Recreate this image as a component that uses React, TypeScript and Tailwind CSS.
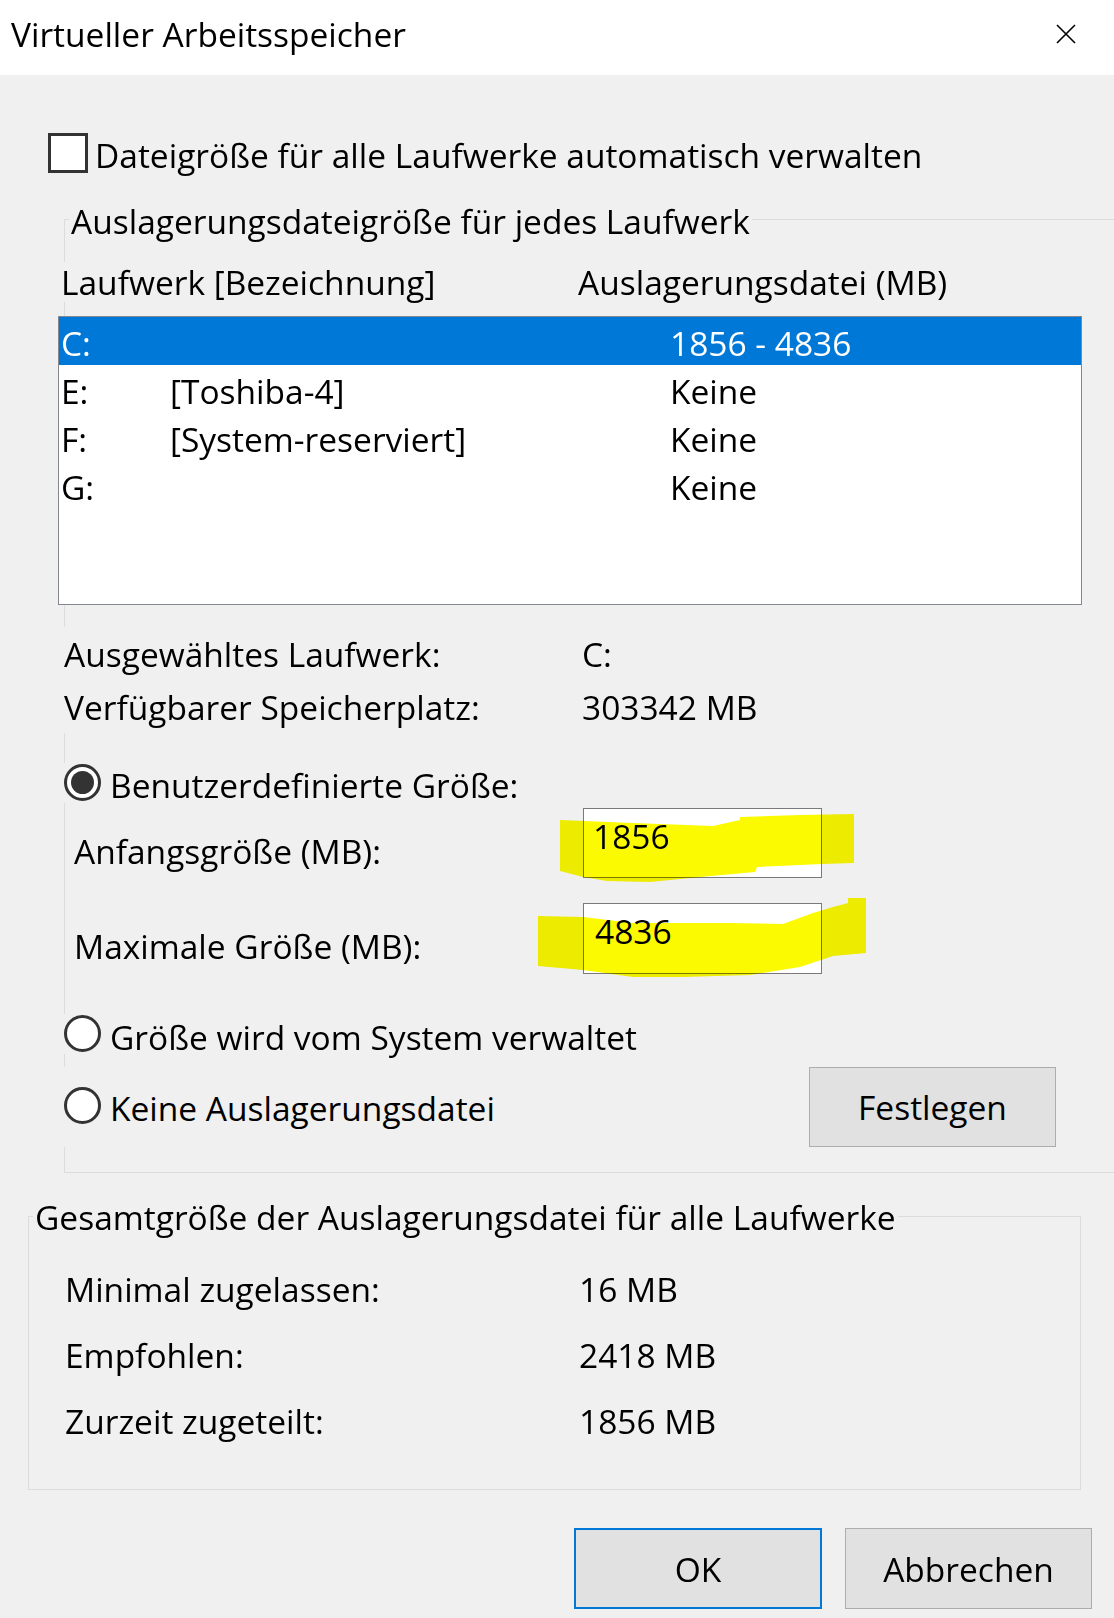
function Radio({ checked }: { checked?: boolean }) {
  return (
    <span className="flex h-[37px] w-[37px] shrink-0 items-center justify-center rounded-full border-[3px] border-[#333333] bg-white">
      {checked && <span className="h-[23px] w-[23px] rounded-full bg-[#333333]" />}
    </span>
  );
}

const drives = [
  { id: "C:", label: "", size: "1856 - 4836", selected: true },
  { id: "E:", label: "[Toshiba-4]", size: "Keine" },
  { id: "F:", label: "[System-reserviert]", size: "Keine" },
  { id: "G:", label: "", size: "Keine" },
];

const totals = [
  ["Minimal zugelassen:", "16 MB"],
  ["Empfohlen:", "2418 MB"],
  ["Zurzeit zugeteilt:", "1856 MB"],
];

export default function App() {
  return (
    <div className="h-[1618px] w-[1114px] overflow-hidden bg-[#f0f0f0] font-['Open_Sans',sans-serif] text-[33.5px] leading-[40px] text-black">
      {/* Titelleiste */}
      <div className="flex h-[75px] items-center justify-between bg-white pb-[7px] pl-[11px] pr-[38px]">
        <span>Virtueller Arbeitsspeicher</span>
        <svg width="20" height="20" viewBox="0 0 20 20">
          <path d="M1 1L19 19M19 1L1 19" stroke="#000" strokeWidth="1.6" />
        </svg>
      </div>

      <div className="mt-[58px] flex h-[40px] items-start pl-[48px]">
        <span className="h-[40px] w-[40px] shrink-0 border-[3px] border-[#333333] bg-white" />
        <span className="ml-[7px] mt-[2px]">Dateigröße für alle Laufwerke automatisch verwalten</span>
      </div>

      {/* Gruppe: pro Laufwerk */}
      <div className="relative ml-[64px] mt-[46px] h-[954px] border-y border-l border-[#dcdcdc]">
        <span className="absolute left-[4px] top-[-19px] bg-[#f0f0f0] px-[2px]">
          Auslagerungsdateigröße für jedes Laufwerk
        </span>

        <div className="relative -ml-[4px] mt-[42px] flex h-[40px] bg-[#f0f0f0]">
          <span className="w-[517px]">Laufwerk [Bezeichnung]</span>
          <span>Auslagerungsdatei (MB)</span>
        </div>

        <div className="relative -ml-[7px] mt-[14px] h-[289px] w-[1024px] border border-[#828790] bg-white">
          {drives.map((d) => (
            <div
              key={d.id}
              className={`flex h-[48px] items-center pl-[2px] pt-[4px] ${d.selected ? "bg-[#0078d7] text-white" : ""}`}
            >
              <span className="w-[109px]">{d.id}</span>
              <span className="w-[500px]">{d.label}</span>
              <span>{d.size}</span>
            </div>
          ))}
        </div>

        <div className="relative -ml-[1px] mt-[22px] bg-[#f0f0f0]">
          <div className="flex h-[53px] items-center">
            <span className="w-[518px]">Ausgewähltes Laufwerk:</span>
            <span>C:</span>
          </div>
          <div className="flex h-[53px] items-center">
            <span className="w-[518px]">Verfügbarer Speicherplatz:</span>
            <span>303342 MB</span>
          </div>
        </div>

        <div className="relative -ml-[1px] mt-[30px] flex h-[40px] items-start bg-[#f0f0f0]">
          <span className="mt-[1px]">
            <Radio checked />
          </span>
          <span className="ml-[9px] mt-[2px]">Benutzerdefinierte Größe:</span>
        </div>

        <div className="mt-[5px] flex h-[70px] items-start pl-[9px]">
          <span className="mt-[23px] w-[509px]">Anfangsgröße (MB):</span>
          <div className="relative h-[70px] w-[239px] border border-[#7a7a7a] bg-white pl-[9px] pt-[7px]">
            <span>1856</span>
            <svg
              className="absolute left-[-54px] top-[-9px] mix-blend-multiply"
              width="340"
              height="90"
              viewBox="530 800 340 90"
            >
              <path
                d="M560 820 L633 823 L713 826 L740 820 L740 817 L800 815 L854 814 L854 863 L822 864 L757 867 L755 872 L700 877 L650 882 L607 881 L583 877 L560 871 Z"
                fill="#fcfa00"
              />
            </svg>
          </div>
        </div>

        <div className="mt-[25px] flex h-[71px] items-start pl-[9px]">
          <span className="mt-[23px] w-[509px]">Maximale Größe (MB):</span>
          <div className="relative h-[71px] w-[239px] border border-[#7a7a7a] bg-white pl-[11px] pt-[7px]">
            <span>4836</span>
            <svg
              className="absolute left-[-54px] top-[-14px] mix-blend-multiply"
              width="340"
              height="95"
              viewBox="530 890 340 95"
            >
              <path
                d="M538 916 L583 917 L633 923 L733 923 L783 924 L813 913 L833 907 L848 903 L848 898 L866 898 L866 953 L833 956 L800 967 L750 975 L683 977 L633 977 L583 970 L538 966 Z"
                fill="#fcfa00"
              />
            </svg>
          </div>
        </div>

        <div className="relative -ml-[1px] mt-[40px] flex h-[40px] items-start bg-[#f0f0f0]">
          <span className="mt-[1px]">
            <Radio />
          </span>
          <span className="ml-[9px] mt-[3px]">Größe wird vom System verwaltet</span>
        </div>

        <div className="relative -ml-[1px] mt-[13px] flex h-[80px] items-start bg-[#f0f0f0]">
          <span className="mt-[20px]">
            <Radio />
          </span>
          <span className="ml-[9px] mt-[21px]">Keine Auslagerungsdatei</span>
          <button className="ml-auto mr-[58px] h-[80px] w-[247px] border border-[#adadad] bg-[#e1e1e1]">
            Festlegen
          </button>
        </div>
      </div>

      {/* Gruppe: Gesamtgröße */}
      <div className="relative ml-[28px] mt-[43px] h-[274px] w-[1053px] border border-[#dcdcdc]">
        <span className="absolute left-[4px] top-[-20px] bg-[#f0f0f0] px-[2px]">
          Gesamtgröße der Auslagerungsdatei für alle Laufwerke
        </span>
        <div className="mt-[39px] pl-[36px]">
          {totals.map(([k, v]) => (
            <div key={k} className="flex h-[66px] items-center">
              <span className="w-[514px]">{k}</span>
              <span>{v}</span>
            </div>
          ))}
        </div>
      </div>

      <div className="mt-[38px] flex justify-end gap-[23px] pr-[22px]">
        <button className="h-[81px] w-[248px] border-2 border-[#0078d7] bg-[#e1e1e1]">OK</button>
        <button className="h-[81px] w-[247px] border border-[#adadad] bg-[#e1e1e1]">Abbrechen</button>
      </div>
    </div>
  );
}
